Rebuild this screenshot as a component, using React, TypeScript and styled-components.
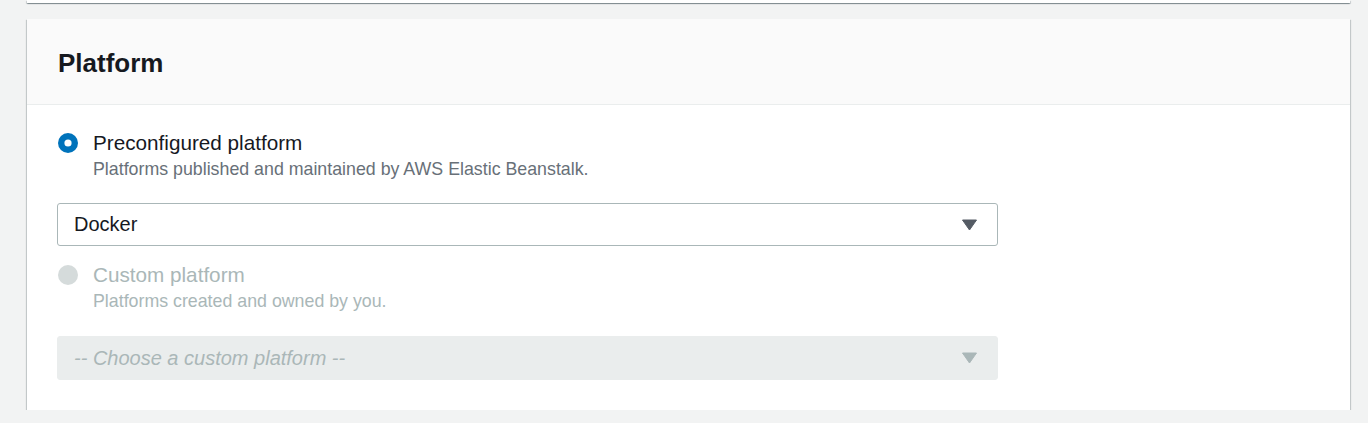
import React from "react";
import styled, { createGlobalStyle } from "styled-components";

const GlobalStyle = createGlobalStyle`
    html, body {
        margin: 0;
        padding: 0;
        background: #f2f3f3;
        font-family: "Liberation Sans", Arial, sans-serif;
        color: #16191f;
    }
`;

const Page = styled.div`
    padding: 0 18px 0 27px;
`;

const PrevCard = styled.div`
    height: 3px;
    background: #ffffff;
    box-shadow: 0 1px 1px 0 rgba(0, 28, 36, 0.3), 1px 1px 1px 0 rgba(0, 28, 36, 0.15), -1px 1px 1px 0 rgba(0, 28, 36, 0.15);
`;

const Card = styled.section`
    margin-top: 16px;
    background: #ffffff;
    box-shadow: 0 1px 1px 0 rgba(0, 28, 36, 0.3), 1px 1px 1px 0 rgba(0, 28, 36, 0.15), -1px 1px 1px 0 rgba(0, 28, 36, 0.15);
`;

const CardHeader = styled.header`
    background: #fafafa;
    border-bottom: 1px solid #eaeded;
    padding: 28px 31px 25px;
    h2 {
        margin: 0;
        font-size: 26px;
        line-height: 32px;
        font-weight: 700;
        color: #16191f;
    }
`;

const CardBody = styled.div`
    padding: 24px 30px 30px;
    display: flex;
    flex-direction: column;
`;

const RadioRow = styled.label<{ disabled?: boolean }>`
    display: flex;
    align-items: flex-start;
    gap: 15px;
    margin-top: ${p => (p.disabled ? "15px" : "0")};
    color: ${p => (p.disabled ? "#aab7b8" : "#16191f")};
`;

const RadioDot = styled.span`
    flex: none;
    width: 20px;
    height: 20px;
    margin: 4px 0 0 1px;
    display: flex;
`;

const RadioText = styled.div`
    display: flex;
    flex-direction: column;
`;

const RadioLabel = styled.span`
    font-size: 20.7px;
    line-height: 28px;
`;

const RadioDescription = styled.span<{ disabled?: boolean }>`
    font-size: 17.8px;
    line-height: 25px;
    color: ${p => (p.disabled ? "#aab7b8" : "#687078")};
`;

const Select = styled.div<{ disabled?: boolean }>`
    width: 941px;
    height: ${p => (p.disabled ? "44px" : "43px")};
    box-sizing: border-box;
    margin-top: ${p => (p.disabled ? "22px" : "21px")};
    display: flex;
    align-items: center;
    justify-content: space-between;
    padding: 0 20px 0 16px;
    border: 1px solid ${p => (p.disabled ? "#eaeded" : "#aab7b8")};
    border-radius: 3px;
    background: ${p => (p.disabled ? "#eaeded" : "#ffffff")};
    color: ${p => (p.disabled ? "#aab7b8" : "#16191f")};
    font-size: 20px;
    font-style: ${p => (p.disabled ? "italic" : "normal")};
`;

const Caret = ({ color }: { color: string }) => (
    <svg width="15" height="12" viewBox="0 0 15 12">
        <path d="M0.5 1 L14.5 1 L7.5 11 Z" fill={color} strokeLinejoin="round" stroke={color} strokeWidth="1" />
    </svg>
);

const Radio = ({ checked }: { checked: boolean }) => (
    <RadioDot>
        <svg width="20" height="20" viewBox="0 0 20 20">
            {checked ? (
                <>
                    <circle cx="10" cy="10" r="10" fill="#0073bb" />
                    <circle cx="10" cy="10" r="3.6" fill="#ffffff" />
                </>
            ) : (
                <circle cx="10" cy="10" r="10" fill="#d5dbdb" />
            )}
        </svg>
    </RadioDot>
);

export default function App() {
    return (
        <>
            <GlobalStyle />
            <Page>
                <PrevCard />
                <Card>
                    <CardHeader>
                        <h2>Platform</h2>
                    </CardHeader>
                    <CardBody>
                        <RadioRow>
                            <Radio checked />
                            <RadioText>
                                <RadioLabel>Preconfigured platform</RadioLabel>
                                <RadioDescription>Platforms published and maintained by AWS Elastic Beanstalk.</RadioDescription>
                            </RadioText>
                        </RadioRow>
                        <Select>
                            <span>Docker</span>
                            <Caret color="#545b64" />
                        </Select>
                        <RadioRow disabled>
                            <Radio checked={false} />
                            <RadioText>
                                <RadioLabel>Custom platform</RadioLabel>
                                <RadioDescription disabled>Platforms created and owned by you.</RadioDescription>
                            </RadioText>
                        </RadioRow>
                        <Select disabled>
                            <span>-- Choose a custom platform --</span>
                            <Caret color="#aab7b8" />
                        </Select>
                    </CardBody>
                </Card>
            </Page>
        </>
    );
}
